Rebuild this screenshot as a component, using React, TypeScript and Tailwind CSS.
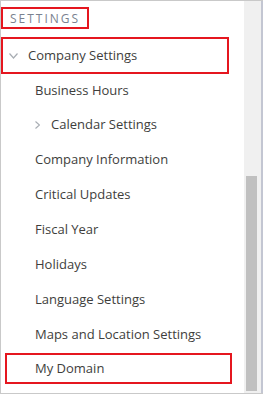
import React from "react";

const items = [
  "Company Information",
  "Critical Updates",
  "Fiscal Year",
  "Holidays",
  "Language Settings",
  "Maps and Location Settings",
];

function ChevronDown() {
  return (
    <svg width="9" height="6" viewBox="0 0 9 6" className="shrink-0">
      <path d="M0.5 0.5 L4.5 5 L8.5 0.5" fill="none" stroke="#a8adb3" strokeWidth="1.2" />
    </svg>
  );
}

function ChevronRight() {
  return (
    <svg width="5" height="8" viewBox="0 0 5 8" className="shrink-0">
      <path d="M0.5 0.5 L4.5 4 L0.5 7.5" fill="none" stroke="#a8adb3" strokeWidth="1.2" />
    </svg>
  );
}

export default function App() {
  return (
    <div
      className="flex w-[263px] h-[394px] bg-white border-l border-t border-b border-[#c9c9c9] text-[13px] text-[#3e3e3c] overflow-hidden"
      style={{ fontFamily: '"Open Sans", "Liberation Sans", sans-serif' }}
    >
      <div className="flex-1 flex flex-col pt-[6px]">
        <div className="w-[88px] h-[22px] border-2 border-[#e5161f] flex items-center pl-[7px] pt-[2px] text-[12px] tracking-[2px] text-[#7a8290] leading-none">
          SETTINGS
        </div>

        <div className="mt-[8px] w-[228px] h-[37px] border-2 border-[#e5161f] flex items-center pl-[6px] gap-[10px]">
          <ChevronDown />
          <span>Company Settings</span>
        </div>

        <div className="h-[33px] flex items-center pl-[34px]">Business Hours</div>

        <div className="h-[35px] flex items-center pl-[34px] gap-[11px]">
          <ChevronRight />
          <span>Calendar Settings</span>
        </div>

        {items.map((label) => (
          <div key={label} className="h-[35px] flex items-center pl-[34px]">
            {label}
          </div>
        ))}

        <div className="mt-[1px] ml-[4px] w-[227px] h-[31px] border-2 border-[#e5161f] flex items-center pl-[28px]">
          My Domain
        </div>
      </div>

      <div className="w-[19px] flex flex-col bg-[#f0f0f0] pl-[2px] pr-[4px] border-r-2 border-[#c3c6d2]">
        <div className="h-[175px]" />
        <div className="flex-1 bg-[#c0c0c0] mb-[2px]" />
      </div>
    </div>
  );
}
